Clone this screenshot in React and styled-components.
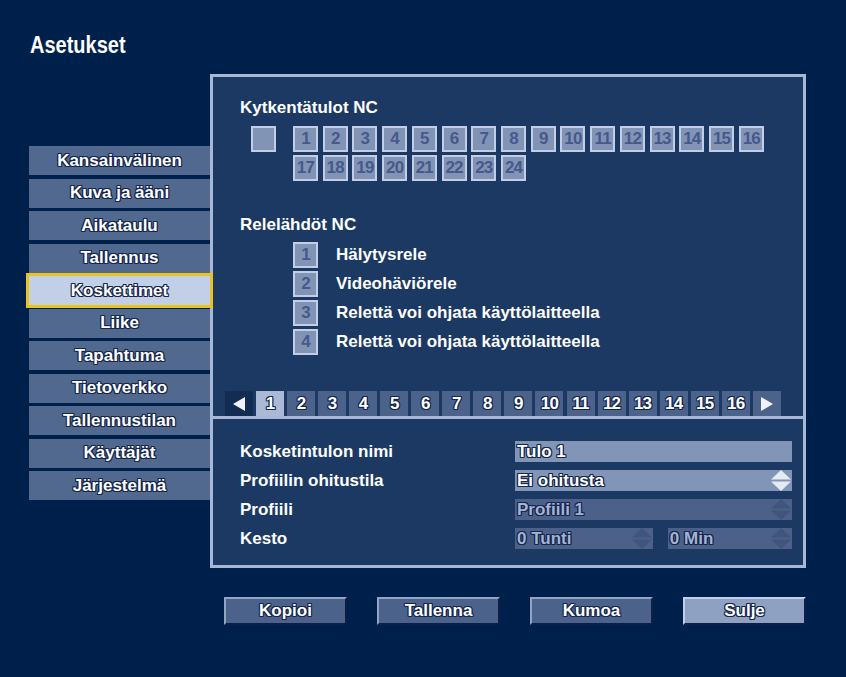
import React from "react";
import styled, { createGlobalStyle, css } from "styled-components";

const GlobalStyle = createGlobalStyle`
  html, body {
    margin: 0;
    padding: 0;
    background: #00204c;
  }
`;

const outlined = css`
  text-shadow: -1px -1px 0 #15264d, 1px -1px 0 #15264d, -1px 1px 0 #15264d,
    1px 1px 0 #15264d, 0 -1px 0 #15264d, 0 1px 0 #15264d, -1px 0 0 #15264d,
    1px 0 0 #15264d;
`;

const Page = styled.div`
  width: 846px;
  height: 677px;
  box-sizing: border-box;
  padding-top: 34px;
  background: #00204c;
  font-family: "Liberation Sans", Arial, sans-serif;
  font-weight: bold;
  color: #ffffff;
  overflow: hidden;
`;

const Title = styled.h1`
  margin: 0 0 0 30px;
  height: 40px;
  font-size: 20px;
  line-height: 24px;
  font-weight: bold;
  transform: scaleY(1.15);
  transform-origin: 0 20px;
`;

const Main = styled.div`
  display: flex;
  align-items: flex-start;
  padding-left: 29px;
`;

const Sidebar = styled.div`
  width: 181px;
  margin-top: 72px;
  display: flex;
  flex-direction: column;
  gap: 3.5px;
`;

const MenuItem = styled.div`
  height: 29px;
  display: flex;
  align-items: center;
  justify-content: center;
  font-size: 17px;
  background: ${(p) => (p.$active ? "#c3cfe6" : "#51698f")};
  ${outlined};
  ${(p) =>
    p.$active &&
    css`
      position: relative;
      z-index: 1;
      outline: 3px solid #e9c31f;
    `}
`;

const Panel = styled.div`
  width: 596px;
  height: 494px;
  box-sizing: border-box;
  border: 3px solid #a7b7d6;
  background: #1b3963;
  display: flex;
  flex-direction: column;
`;

const Upper = styled.div`
  height: 339px;
  box-sizing: border-box;
  padding: 21px 0 0 12px;
  display: flex;
  flex-direction: column;
`;

const UpperContent = styled.div`
  padding-left: 15px;
`;

const Heading = styled.div`
  font-size: 17px;
  line-height: 20px;
  margin-top: ${(p) => p.$top || 0}px;
`;

const CheckRow = styled.div`
  display: flex;
  align-items: flex-start;
  margin-top: 8px;
  padding-left: 11px;
`;

const CheckGrid = styled.div`
  margin-left: 17px;
  display: grid;
  grid-template-columns: repeat(16, 25px);
  grid-auto-rows: 26px;
  column-gap: 4.73px;
  row-gap: 3px;
`;

const Box = styled.div`
  width: 25px;
  height: 26px;
  box-sizing: border-box;
  border: 2px solid #c2cee6;
  background: #8194b6;
  color: #46598a;
  font-size: 17px;
  display: flex;
  align-items: center;
  justify-content: center;
  letter-spacing: -0.8px;
`;

const RelayList = styled.div`
  margin-top: 6.7px;
  padding-left: 53px;
  display: flex;
  flex-direction: column;
  gap: 3px;
`;

const RelayRow = styled.div`
  display: flex;
  align-items: center;
  gap: 18px;
  font-size: 17px;
`;

const TabBar = styled.div`
  margin-top: auto;
  height: 25px;
  display: flex;
  gap: 3.05px;
`;

const Tab = styled.div`
  width: 28px;
  height: 25px;
  display: flex;
  align-items: center;
  justify-content: center;
  font-size: 17px;
  letter-spacing: -0.8px;
  background: ${(p) =>
    p.$active ? "#a9b9d6" : p.$dim ? "#132c53" : "#4b638b"};
  ${outlined};
`;

const Lower = styled.div`
  flex: 1;
  border-top: 3px solid #a7b7d6;
  padding: 22px 11px 0 27px;
  display: grid;
  grid-template-columns: 275px 1fr;
  grid-auto-rows: 21px;
  row-gap: 8px;
  align-content: start;
`;

const Label = styled.div`
  font-size: 17px;
  display: flex;
  align-items: center;
`;

const FieldGroup = styled.div`
  display: flex;
  gap: 15px;
`;

const Field = styled.div`
  flex: ${(p) => p.$grow || 1};
  height: 21px;
  box-sizing: border-box;
  padding: 0 1px 0 2px;
  display: flex;
  align-items: center;
  font-size: 17px;
  background: ${(p) => (p.$disabled ? "#4b6189" : "#8195b6")};
  color: ${(p) => (p.$disabled ? "#a4b4d3" : "#ffffff")};
  ${outlined};
`;

const Spinner = styled.svg`
  margin-left: auto;
  flex: none;
`;

const ButtonRow = styled.div`
  display: flex;
  gap: 30px;
  margin-top: 29px;
  padding-left: 224px;
`;

const Button = styled.button`
  width: 123px;
  height: 28px;
  box-sizing: border-box;
  padding: 0;
  font-family: "Liberation Sans", Arial, sans-serif;
  font-weight: bold;
  font-size: 17px;
  color: #ffffff;
  background: ${(p) => (p.$primary ? "#8ea1c3" : "#4b628a")};
  border: 2px solid;
  border-color: ${(p) =>
    p.$primary
      ? "#c3cfe6 #0d1f45 #0d1f45 #c3cfe6"
      : "#93a5c5 #0d1f45 #0d1f45 #93a5c5"};
  ${outlined};
`;

const Arrow = ({ dir }) => (
  <svg width="12" height="14" viewBox="0 0 12 14">
    <polygon
      points={dir === "left" ? "12,0 12,14 0,7" : "0,0 0,14 12,7"}
      fill="#eef2fa"
    />
  </svg>
);

const Diamond = ({ disabled }) => (
  <Spinner width="20" height="21" viewBox="0 0 20 21">
    <polygon points="0,9.5 10,0 20,9.5" fill={disabled ? "#40557c" : "#e6eaf2"} />
    <polygon points="0,11.5 20,11.5 10,21" fill={disabled ? "#40557c" : "#e6eaf2"} />
  </Spinner>
);

const menu = [
  "Kansainvälinen",
  "Kuva ja ääni",
  "Aikataulu",
  "Tallennus",
  "Koskettimet",
  "Liike",
  "Tapahtuma",
  "Tietoverkko",
  "Tallennustilan",
  "Käyttäjät",
  "Järjestelmä",
];

const relays = [
  "Hälytysrele",
  "Videohäviörele",
  "Relettä voi ohjata käyttölaitteella",
  "Relettä voi ohjata käyttölaitteella",
];

const inputs = Array.from({ length: 24 }, (_, i) => i + 1);
const pages = Array.from({ length: 16 }, (_, i) => i + 1);

export default function App() {
  return (
    <>
      <GlobalStyle />
      <Page>
        <Title>Asetukset</Title>
        <Main>
          <Sidebar>
            {menu.map((m) => (
              <MenuItem key={m} $active={m === "Koskettimet"}>
                {m}
              </MenuItem>
            ))}
          </Sidebar>
          <Panel>
            <Upper>
              <UpperContent>
                <Heading>Kytkentätulot NC</Heading>
                <CheckRow>
                  <Box />
                  <CheckGrid>
                    {inputs.map((n) => (
                      <Box key={n}>{n}</Box>
                    ))}
                  </CheckGrid>
                </CheckRow>
                <Heading $top={34}>Relelähdöt NC</Heading>
                <RelayList>
                  {relays.map((r, i) => (
                    <RelayRow key={i}>
                      <Box>{i + 1}</Box>
                      {r}
                    </RelayRow>
                  ))}
                </RelayList>
              </UpperContent>
              <TabBar>
                <Tab $dim>
                  <Arrow dir="left" />
                </Tab>
                {pages.map((p) => (
                  <Tab key={p} $active={p === 1}>
                    {p}
                  </Tab>
                ))}
                <Tab>
                  <Arrow dir="right" />
                </Tab>
              </TabBar>
            </Upper>
            <Lower>
              <Label>Kosketintulon nimi</Label>
              <Field>Tulo 1</Field>
              <Label>Profiilin ohitustila</Label>
              <Field>
                Ei ohitusta
                <Diamond />
              </Field>
              <Label>Profiili</Label>
              <Field $disabled>
                Profiili 1
                <Diamond disabled />
              </Field>
              <Label>Kesto</Label>
              <FieldGroup>
                <Field $disabled $grow={138}>
                  0 Tunti
                  <Diamond disabled />
                </Field>
                <Field $disabled $grow={124}>
                  0 Min
                  <Diamond disabled />
                </Field>
              </FieldGroup>
            </Lower>
          </Panel>
        </Main>
        <ButtonRow>
          <Button>Kopioi</Button>
          <Button>Tallenna</Button>
          <Button>Kumoa</Button>
          <Button $primary>Sulje</Button>
        </ButtonRow>
      </Page>
    </>
  );
}
